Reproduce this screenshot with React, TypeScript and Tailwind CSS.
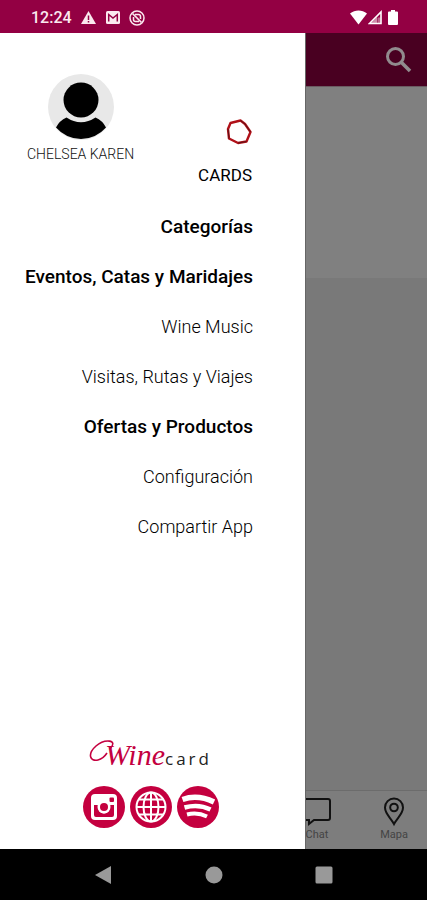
import type { ReactNode } from "react";

type MenuItem = { label: string; bold?: boolean };

const menu: MenuItem[] = [
	{ label: "Categorías", bold: true },
	{ label: "Eventos, Catas y Maridajes", bold: true },
	{ label: "Wine Music" },
	{ label: "Visitas, Rutas y Viajes" },
	{ label: "Ofertas y Productos", bold: true },
	{ label: "Configuración" },
	{ label: "Compartir App" },
];

export default function App() {
	return (
		<div className="flex min-h-screen flex-col bg-black font-[Roboto,sans-serif]">
			<StatusBar />
			<div className="flex flex-1">
				<Drawer />
				<DimmedPage />
			</div>
			<SystemNav />
		</div>
	);
}

function StatusBar() {
	return (
		<header className="flex h-[33px] items-center justify-between bg-[#930043] pr-[29px] pl-[31px] pt-[2px] text-[#fbe9ef]">
			<div className="flex items-center">
				<span className="w-[50px] text-base font-medium">12:24</span>
				<svg className="h-[15px] w-[15px]" viewBox="0 0 15 15">
					<path d="M7.500 1 15 14H0z" fill="currentColor" />
					<path d="M7.500 5.500v4.500M7.500 11v1.600" stroke="#930043" strokeWidth="1.500" />
				</svg>
				<svg className="ml-[10px] h-[13px] w-[14px]" viewBox="0 0 14 13" fill="none">
					<rect width="14" height="13" rx="1.500" fill="currentColor" />
					<path d="M2.700 10.500V3.500L7 7l4.300-3.500v7" stroke="#930043" strokeWidth="1.500" />
				</svg>
				<svg className="ml-[9px] h-4 w-4" viewBox="0 0 16 16" fill="none" stroke="currentColor">
					<circle cx="8" cy="8" r="7" strokeWidth="1.500" />
					<path d="M6 4.500h3.500a2 2 0 0 1 2 2V9M10 11.500H6.500a2 2 0 0 1-2-2V7" strokeWidth="1.500" />
					<path d="m3.500 3.500 9 9" strokeWidth="1.700" />
				</svg>
			</div>
			<div className="flex items-center">
				<svg className="h-[15px] w-[17px]" viewBox="0 0 17 15">
					<path d="M0 3.500C5-.5 12-.5 17 3.500L8.500 14.500z" fill="#fff" />
				</svg>
				<svg className="ml-px h-[15px] w-[14px]" viewBox="0 0 14 15" fill="none">
					<path d="M1.500 13.500 13 2v11.500z" stroke="#fff" strokeWidth="1.600" />
					<path d="M9 7v6.500H3z" fill="#fff" fillOpacity=".55" />
					<path d="M9.500 7.500h3v6h-3z" fill="#fff" fillOpacity=".4" />
				</svg>
				<svg className="ml-[6px] h-[15px] w-[10px]" viewBox="0 0 10 15">
					<path d="M3 0h4v1.500h2q1 0 1 1V14q0 1-1 1H1q-1 0-1-1V2.500q0-1 1-1h2z" fill="#fff" />
				</svg>
			</div>
		</header>
	);
}

function Drawer() {
	return (
		<nav className="flex w-5/7 shrink-0 flex-col bg-white" aria-label="Menú">
			<div className="flex h-[169px] justify-between pt-[41px] pr-[53px] pl-[27px]">
				<div className="flex flex-col items-center">
					<Avatar />
					<span className="mt-1 text-sm leading-5 font-light whitespace-nowrap text-[#111]">
						CHELSEA KAREN
					</span>
				</div>
				<a href="#cards" className="flex flex-col items-end pt-[45px] text-black">
					<svg className="h-[26px] w-[26px]" viewBox="0 0 26 26" fill="none" strokeLinejoin="round">
						<path d="M4.500 4 14.500 1.500 19 5 24.500 13 20.500 22.500 12 24 3 19.500 2 10z" stroke="#b01018" strokeWidth="2.400" />
						<path d="M14.500 1.500 19 5l5.500 8M20.500 22.500 12 24M3 19.500 2 10" stroke="#5f1015" strokeWidth="1" />
					</svg>
					<span className="mt-[18px] text-[17px] leading-6">CARDS</span>
				</a>
			</div>
			<ul className="pr-[52px]">
				{menu.map((item) => (
					<li key={item.label} className="flex h-[50px] items-center justify-end">
						<a
							href="#menu"
							className={
								item.bold
									? "text-[19px] leading-7 font-medium whitespace-nowrap text-black"
									: "text-lg font-light whitespace-nowrap text-black"
							}
						>
							{item.label}
						</a>
					</li>
				))}
			</ul>
			<div className="mt-auto flex flex-col items-center pr-1 pb-[21px]">
				<Wordmark />
				<div className="mt-[15px] flex gap-[5px]">
					<Social label="Instagram">
						<rect x="8" y="8" width="26" height="26" rx="4" fill="#fff" />
						<path d="M11 19h4.500a6 6 0 1 0 11 0h4.500v10q0 2-2 2h-16q-2 0-2-2z" fill="#c4003f" />
						<circle cx="21" cy="21" r="6.500" fill="#fff" />
						<circle cx="21" cy="21" r="4" fill="#c4003f" />
						<rect x="26.500" y="11.500" width="4.500" height="4.500" rx="1" fill="#c4003f" />
					</Social>
					<Social label="Sitio web">
						<g fill="none" stroke="#fff" strokeWidth="2">
							<circle cx="21" cy="21" r="14.500" />
							<ellipse cx="21" cy="21" rx="7.500" ry="14.500" />
							<path d="M21 6.500v29M6.500 21h29M9 13.500h24M9 28.500h24" />
						</g>
					</Social>
					<Social label="Spotify">
						<g fill="none" stroke="#fff">
							<path d="M5.500 13.500c10-3.500 21-2.500 31.500 2.500" strokeWidth="5.500" />
							<path d="M7.500 21.500c9-2.500 18-2 26 2" strokeWidth="4.500" />
							<path d="M10 28.500c7-1.800 13.500-1.200 20 2" strokeWidth="4" />
						</g>
					</Social>
				</div>
			</div>
		</nav>
	);
}

function Avatar() {
	return (
		<svg className="h-[66px] w-[66px]" viewBox="0 0 66 66">
			<circle cx="33" cy="33" r="33" fill="#e8e8e8" />
			<circle cx="33" cy="26" r="17.500" />
			<path d="M18.500 43.500Q33 53 47.500 43.500 54.500 46.500 58 53.500A33 33 0 0 1 8 53.500Q11.500 46.500 18.500 43.500z" />
		</svg>
	);
}

function Wordmark() {
	return (
		<div className="relative flex h-8 items-baseline pl-4">
			<svg className="absolute top-0 left-0 h-8 w-8" viewBox="0 0 32 32" fill="none">
				<path d="M21 10C30 0 15 0 7 7c-9 8-6 16 2 14 4-1 7-4 9-7" stroke="#c4003f" strokeWidth="1.600" />
			</svg>
			<span className="font-['Liberation_Serif',serif] text-[30px] leading-8 text-[#c4003f] italic">
				Wine
			</span>
			<span className="font-['Open_Sans',sans-serif] text-[17px] tracking-[3px] text-[#222]">card</span>
		</div>
	);
}

function Social({ label, children }: { label: string; children: ReactNode }) {
	return (
		<a href="#social" aria-label={label}>
			<svg className="h-[42px] w-[42px]" viewBox="0 0 42 42">
				<circle cx="21" cy="21" r="21" fill="#c4003f" />
				{children}
			</svg>
		</a>
	);
}

// The page behind the drawer, already darkened by the scrim
function DimmedPage() {
	return (
		<main className="flex min-w-0 flex-1 flex-col overflow-hidden border-l border-[#666] bg-[#797979]">
			<div className="flex h-[54px] shrink-0 items-center justify-end border-b border-[#6b5b62] bg-[#490021] pr-[15px]">
				<button type="button" aria-label="Buscar">
					<svg className="h-[27px] w-[27px]" viewBox="0 0 27 27" fill="none" stroke="#918b8e">
						<circle cx="10.500" cy="10.500" r="8" strokeWidth="3" />
						<path d="m16.500 16.500 8.500 8.500" strokeWidth="3.600" />
					</svg>
				</button>
			</div>
			<div className="h-[191px] shrink-0 bg-[#808080]" />
			<div className="mt-auto flex h-[59px] justify-end border-t border-[#6c6c6c] bg-[#7d7d7d] text-[11px] leading-4 text-[#444]">
				<button type="button" className="flex w-[88px] shrink-0 flex-col items-center pt-1.5">
					<svg className="h-[30px] w-[30px]" viewBox="0 0 30 30" fill="none" stroke="#111" strokeWidth="2">
						<path d="M3 2h23q2 0 2 2v17q0 2-2 2H12l-5 4v-4H3q-2 0-2-2V4q0-2 2-2z" />
					</svg>
					<span>Chat</span>
				</button>
				<button type="button" className="flex w-[66px] shrink-0 flex-col items-center pt-1.5">
					<svg className="h-[30px] w-[30px]" viewBox="0 0 30 30" fill="none" stroke="#111" strokeWidth="2">
						<path d="M15 27C12 21 6 17 6 10.500a9 9 0 0 1 18 0C24 17 18 21 15 27z" />
						<circle cx="15" cy="10.500" r="3.800" />
					</svg>
					<span>Mapa</span>
				</button>
			</div>
		</main>
	);
}

function SystemNav() {
	return (
		<footer className="flex h-[51px] items-center justify-center gap-[86px] bg-black">
			<button type="button" aria-label="Atrás">
				<svg className="h-6 w-6" viewBox="0 0 24 24">
					<path d="M3 12 19 3v18z" fill="#999" />
				</svg>
			</button>
			<button type="button" aria-label="Inicio">
				<svg className="h-6 w-6" viewBox="0 0 24 24">
					<circle cx="12" cy="12" r="8.500" fill="#999" />
				</svg>
			</button>
			<button type="button" aria-label="Recientes">
				<svg className="h-6 w-6" viewBox="0 0 24 24">
					<rect x="3.500" y="3.500" width="17" height="17" rx="1.500" fill="#999" />
				</svg>
			</button>
		</footer>
	);
}
